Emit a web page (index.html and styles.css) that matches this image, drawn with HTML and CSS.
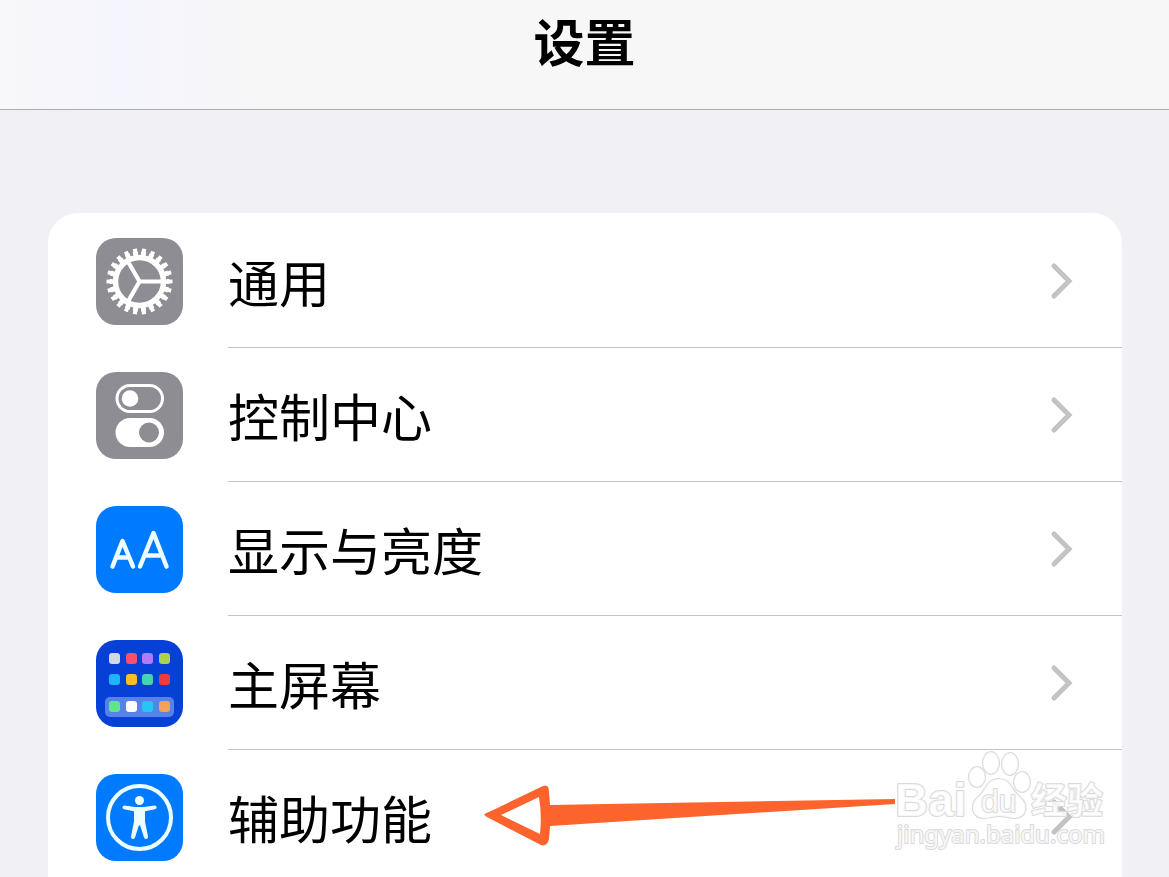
FILE: index.html
```html
<!DOCTYPE html>
<html lang="zh-CN">
	<head>
		<meta charset="utf-8">
		<meta name="viewport" content="width=device-width, initial-scale=1">
		<title>设置</title>
		<link rel="stylesheet" href="styles.css">
	</head>
	<body>

		<header class="top">
			<h1>设置</h1>
		</header>

		<main>
			<ul class="list">

				<li>
					<a class="row" href="#general">
						<svg class="icon gray" viewBox="0 0 87 87" aria-hidden="true">
							<g fill="none" stroke="#fff">
								<circle cx="43.5" cy="43.5" r="27.5" stroke-width="5" pathLength="220" stroke-dasharray="6.2 3.8" stroke-dashoffset="3.1"/>
								<circle cx="43.5" cy="43.5" r="30.5" stroke-width="5" pathLength="220" stroke-dasharray="4.6 5.4" stroke-dashoffset="2.3"/>
								<circle cx="43.5" cy="43.5" r="24" stroke-width="5.5"/>
								<path d="M43.5 43.5H66M43.5 43.5L32.5 24.5M43.5 43.5L32.5 62.5" stroke-width="4.2"/>
							</g>
						</svg>
						<div class="content">
							<span class="label">通用</span>
							<svg class="arrow" viewBox="0 0 24 40" aria-hidden="true"><path d="M4 5L19 20L4 35"/></svg>
						</div>
					</a>
				</li>

				<li>
					<a class="row" href="#control">
						<svg class="icon gray" viewBox="0 0 87 87" aria-hidden="true">
							<rect x="21" y="13.5" width="45.5" height="26" rx="13" fill="none" stroke="#fff" stroke-width="3"/>
							<circle cx="34" cy="26.5" r="8.3" fill="#fff"/>
							<rect x="19.5" y="46" width="48.5" height="29" rx="14.5" fill="#fff"/>
							<circle cx="53" cy="60.5" r="10" fill="#8e8d93"/>
						</svg>
						<div class="content">
							<span class="label">控制中心</span>
							<svg class="arrow" viewBox="0 0 24 40" aria-hidden="true"><path d="M4 5L19 20L4 35"/></svg>
						</div>
					</a>
				</li>

				<li>
					<a class="row" href="#display">
						<svg class="icon blue" viewBox="0 0 87 87" aria-hidden="true">
							<g fill="none" stroke="#ecfdff" stroke-width="4.5" stroke-linecap="round" stroke-linejoin="round">
								<path d="M16.5 60.5L26.5 35L37 60.5M20 51.5H33"/>
								<path d="M44 60.5L57.5 27L70.5 60.5M48.5 49.5H66"/>
							</g>
						</svg>
						<div class="content">
							<span class="label">显示与亮度</span>
							<svg class="arrow" viewBox="0 0 24 40" aria-hidden="true"><path d="M4 5L19 20L4 35"/></svg>
						</div>
					</a>
				</li>

				<li>
					<a class="row" href="#home">
						<svg class="icon navy" viewBox="0 0 87 87" aria-hidden="true">
							<rect x="9" y="57" width="69" height="20" rx="5" fill="#5782e8"/>
							<rect x="13" y="13" width="11" height="11" rx="3" fill="#d3d8e2"/>
							<rect x="30" y="13" width="11" height="11" rx="3" fill="#fa506e"/>
							<rect x="46" y="13" width="11" height="11" rx="3" fill="#b478fa"/>
							<rect x="63" y="13" width="11" height="11" rx="3" fill="#aad24b"/>
							<rect x="13" y="34" width="11" height="11" rx="3" fill="#1eb4fa"/>
							<rect x="30" y="34" width="11" height="11" rx="3" fill="#fabe28"/>
							<rect x="46" y="34" width="11" height="11" rx="3" fill="#46d2b4"/>
							<rect x="63" y="34" width="11" height="11" rx="3" fill="#f03c37"/>
							<rect x="13" y="61" width="11" height="11" rx="3" fill="#5fe68c"/>
							<rect x="30" y="61" width="11" height="11" rx="3" fill="#fff"/>
							<rect x="46" y="61" width="11" height="11" rx="3" fill="#28c3fa"/>
							<rect x="63" y="61" width="11" height="11" rx="3" fill="#f5a05a"/>
						</svg>
						<div class="content">
							<span class="label">主屏幕</span>
							<svg class="arrow" viewBox="0 0 24 40" aria-hidden="true"><path d="M4 5L19 20L4 35"/></svg>
						</div>
					</a>
				</li>

				<li class="marked">
					<a class="row" href="#accessibility">
						<svg class="icon blue" viewBox="0 0 87 87" aria-hidden="true">
							<circle cx="43.5" cy="43.5" r="31.5" fill="none" stroke="#ecfdff" stroke-width="4"/>
							<g fill="#ecfdff">
								<circle cx="43.5" cy="26.5" r="4.5"/>
								<path d="M28.5 31.5L39 33H48L58.5 31.5Q60.5 31.5 60.7 33.3Q60.7 34.7 59 35.2L49 37.2V47.5L52 62.5Q52.2 64.5 50.5 65Q48.8 65.2 48 63.5L44.2 51.5H42.8L39 63.5Q38.2 65.2 36.500 65Q34.800 64.500 35 62.500L38 47.500V37.200L28 35.200Q26.300 34.700 26.500 33Q26.900 31.500 28.500 31.500Z"/>
							</g>
						</svg>
						<div class="content">
							<span class="label">辅助功能</span>
							<svg class="arrow" viewBox="0 0 24 40" aria-hidden="true"><path d="M4 5L19 20L4 35"/></svg>
						</div>
					</a>

					<svg class="pointer" viewBox="0 0 412 64" aria-hidden="true">
						<path fill="#fd632c" fill-rule="evenodd" d="M0 31Q1 29 5 28L59 2Q65 0 65 8L66 21L411 15V20L66 42L65 55Q63 63 57 61L3 33ZM17 31L56 50Q58 31 55 13Z"/>
					</svg>

					<svg class="mark" viewBox="0 0 220 110" aria-label="Baidu 经验 jingyan.baidu.com" role="img">
						<g class="outline">
							<text class="big" x="5" y="71">Bai</text>
							<ellipse cx="87" cy="32" rx="8" ry="10"/>
							<ellipse cx="101" cy="18" rx="8" ry="11"/>
							<ellipse cx="120" cy="19" rx="8" ry="11"/>
							<ellipse cx="132" cy="37" rx="8" ry="10"/>
							<path d="M109 34C96 34 97 45 88 52C80 59 81 73 94 73C101 73 104 71 109 71C115 71 119 73 125 73C138 72 138 59 130 52C120 44 121 34 109 34Z"/>
							<text class="du" x="91" y="67">du</text>
							<text class="cn" x="141" y="69">经验</text>
							<text class="site" x="7" y="98">jingyan.baidu.com</text>
						</g>
					</svg>
				</li>

			</ul>
		</main>

	</body>
</html>
```
FILE: styles.css
```css
*{
	box-sizing: border-box;
}

body{
	margin: 0;
	height: 100vh;
	display: flex;
	flex-direction: column;
	overflow: hidden;
	background-color: #f0f0f5;
	color: #000;
	font-family: "Noto Sans CJK SC", sans-serif;
}

.top{
	display: flex;
	flex-shrink: 0;
	justify-content: center;
	height: 110px;
	padding-top: 4px;
	border-bottom: 1px solid #acacb0;
	background: linear-gradient(90deg, #f8f8fa, #f5f5fd 10%, #f7f7f7 24%, #f7f7f7);
}

.top h1{
	margin: 0;
	font-size: 51px;
	line-height: 72px;
	font-weight: 700;
}

main{
	flex: 1;
	min-height: 0;
	padding: 103px 47px 0 48px;
	overflow-y: auto;
	scrollbar-width: none;
}

.list{
	margin: 0;
	padding: 1px 0 0;
	list-style: none;
	background-color: #fff;
	border-radius: 30px 30px 0 0;
}

.row{
	display: flex;
	align-items: center;
	gap: 45px;
	height: 134px;
	padding-left: 48px;
	color: inherit;
	text-decoration: none;
}

.icon{
	flex-shrink: 0;
	width: 87px;
	height: 87px;
	border-radius: 20px;
}

.gray{
	background-color: #8e8d93;
}

.blue{
	background-color: #007aff;
}

.navy{
	background-color: #0640d6;
}

.content{
	display: flex;
	flex: 1;
	align-items: center;
	justify-content: space-between;
	height: 100%;
	padding-right: 48px;
	border-bottom: 1px solid #c4c4c6;
}

.label{
	font-size: 51px;
	line-height: 72px;
}

.arrow{
	width: 24px;
	height: 40px;
	fill: none;
	stroke: #c3c3c5;
	stroke-width: 5;
	stroke-linecap: round;
	stroke-linejoin: miter;
}

.marked{
	position: relative;
}

.marked .content{
	border-bottom: 0;
}

/* hand drawn arrow over the row */
.pointer{
	position: absolute;
	top: 34px;
	left: 436px;
	width: 412px;
	height: 64px;
	pointer-events: none;
}

.mark{
	position: absolute;
	top: -5px;
	right: 12px;
	width: 220px;
	height: 110px;
	pointer-events: none;
}

.outline{
	fill: rgba(255,255,255,0.8);
	stroke: #dadada;
	stroke-width: 2;
	stroke-linejoin: round;
	paint-order: stroke;
	font-family: "Liberation Sans", "Noto Sans CJK SC", sans-serif;
}

.big{
	font-size: 46px;
	font-weight: 700;
}

.du{
	font-size: 32px;
}

.cn{
	font-size: 36px;
	font-weight: 700;
}

.site{
	font-family: "Noto Sans", sans-serif;
	font-size: 24px;
}
```
